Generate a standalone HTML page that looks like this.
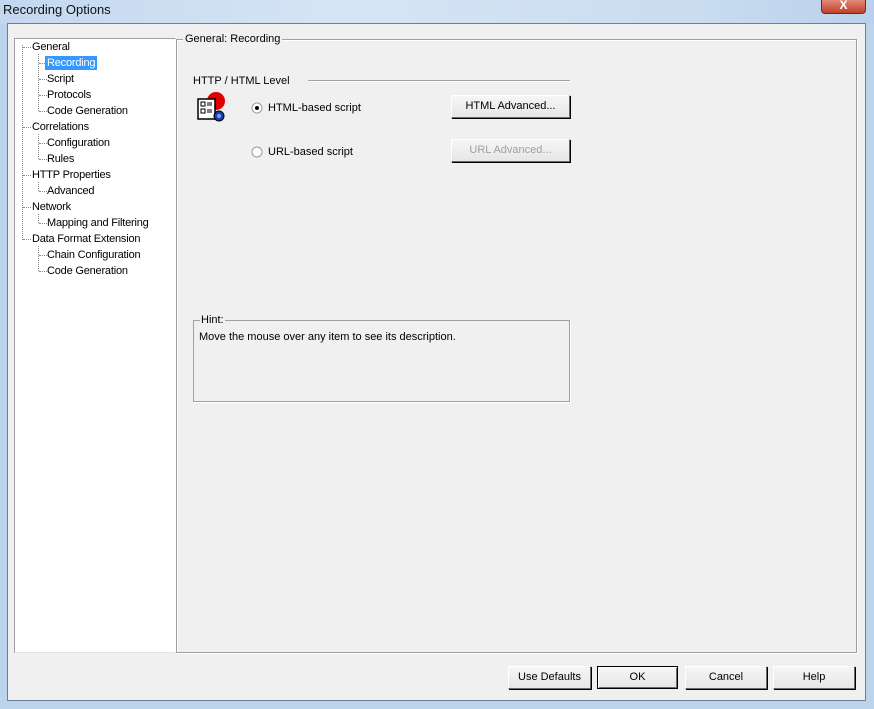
<!DOCTYPE html>
<html><head><meta charset="utf-8"><style>
*{margin:0;padding:0;box-sizing:border-box}
body{width:874px;height:709px;position:relative;overflow:hidden;background:#bcd3ec;font-family:"Liberation Sans",sans-serif;font-size:11px;color:#000}
.a{position:absolute;white-space:nowrap}
.btn{position:absolute;height:23px;background:linear-gradient(#f6f6f6,#e6e6e6);border:1px solid #fff;border-right-color:#6b6b6b;border-bottom-color:#6b6b6b;box-shadow:1px 1px 0 #000;text-align:center;line-height:20px}
.t{position:absolute;left:0;height:14px;line-height:14px;white-space:nowrap;letter-spacing:-0.2px}
.dl{position:absolute;border-left:1px dotted #888}
.dh{position:absolute;border-top:1px dotted #888;width:8px}
</style></head><body>
<div class="a" style="left:0;top:0;width:874px;height:24px;background:linear-gradient(90deg,#c3d8ef,#d6e5f5 40%,#c9dcf0 80%,#b9d1ea)"></div>
<div class="a" style="left:3px;top:2px;font-size:13px;color:#111">Recording Options</div>
<div class="a" style="left:821px;top:0;width:45px;height:14px;background:linear-gradient(#e08a78,#c0402a);border:1px solid #6b2a20;border-top:none;border-radius:0 0 4px 4px;color:#fff;font-weight:bold;text-align:center;line-height:10px;font-size:12px">X</div>
<div class="a" style="left:7px;top:23px;width:859px;height:678px;background:#f0f0f0;border:1px solid #6d7f94"></div>
<div class="a" style="left:14px;top:38px;width:162px;height:615px;background:#fff;border:1px solid #a0a0a0;border-right-color:#fff;border-bottom-color:#e3e3e3"></div>
<div class="dl" style="left:22px;top:45px;height:195px"></div>
<div class="dl" style="left:38px;top:54px;height:57px"></div>
<div class="dl" style="left:38px;top:134px;height:25px"></div>
<div class="dl" style="left:38px;top:182px;height:9px"></div>
<div class="dl" style="left:38px;top:214px;height:9px"></div>
<div class="dl" style="left:38px;top:246px;height:25px"></div>
<div class="a" style="left:0;top:40px;width:176px">
<div class="dh" style="left:23px;top:7px"></div><div class="t" style="left:32px;top:0">General</div>
<div class="dh" style="left:39px;top:23px;width:6px"></div><div class="t" style="left:45px;top:16px;background:#3399ff;color:#fff;padding:0 2px">Recording</div>
<div class="dh" style="left:39px;top:39px"></div><div class="t" style="left:47px;top:32px">Script</div>
<div class="dh" style="left:39px;top:55px"></div><div class="t" style="left:47px;top:48px">Protocols</div>
<div class="dh" style="left:39px;top:71px"></div><div class="t" style="left:47px;top:64px">Code Generation</div>
<div class="dh" style="left:23px;top:87px"></div><div class="t" style="left:32px;top:80px">Correlations</div>
<div class="dh" style="left:39px;top:103px"></div><div class="t" style="left:47px;top:96px">Configuration</div>
<div class="dh" style="left:39px;top:119px"></div><div class="t" style="left:47px;top:112px">Rules</div>
<div class="dh" style="left:23px;top:135px"></div><div class="t" style="left:32px;top:128px">HTTP Properties</div>
<div class="dh" style="left:39px;top:151px"></div><div class="t" style="left:47px;top:144px">Advanced</div>
<div class="dh" style="left:23px;top:167px"></div><div class="t" style="left:32px;top:160px">Network</div>
<div class="dh" style="left:39px;top:183px"></div><div class="t" style="left:47px;top:176px">Mapping and Filtering</div>
<div class="dh" style="left:23px;top:199px"></div><div class="t" style="left:32px;top:192px">Data Format Extension</div>
<div class="dh" style="left:39px;top:215px"></div><div class="t" style="left:47px;top:208px">Chain Configuration</div>
<div class="dh" style="left:39px;top:231px"></div><div class="t" style="left:47px;top:224px">Code Generation</div>
</div>
<div class="a" style="left:176px;top:39px;width:681px;height:614px;border:1px solid #a0a0a0;box-shadow:inset 1px 1px 0 #fff,1px 1px 0 #fff"></div>
<div class="a" style="left:183px;top:33px;background:#f0f0f0;padding:0 2px">General: Recording</div>
<div class="a" style="left:193px;top:75px">HTTP / HTML Level</div>
<div class="a" style="left:308px;top:80px;width:262px;border-top:1px solid #a0a0a0;border-bottom:1px solid #fff"></div>
<svg class="a" style="left:196px;top:91px" width="34" height="32" viewBox="0 0 34 32">
<circle cx="20" cy="10" r="9" fill="#e00000"/>
<rect x="2" y="8" width="17" height="20" fill="#fff" stroke="#000" stroke-width="1.5"/>
<rect x="5" y="11" width="4" height="4" fill="none" stroke="#000"/><rect x="5" y="18" width="4" height="4" fill="none" stroke="#000"/>
<path d="M11 12h5M11 14h5M11 19h5M11 21h5" stroke="#000"/>
<circle cx="23" cy="25" r="5" fill="#1a3fb0" stroke="#000"/><circle cx="23" cy="25" r="2" fill="#6fa0ff"/>
</svg>
<svg class="a" style="left:251px;top:102px" width="12" height="12"><circle cx="6" cy="6" r="5" fill="#fff" stroke="#999"/><circle cx="6" cy="6" r="2" fill="#000"/></svg>
<div class="a" style="left:268px;top:102px">HTML-based script</div>
<svg class="a" style="left:251px;top:146px" width="12" height="12"><circle cx="6" cy="6" r="5" fill="#fff" stroke="#999"/></svg>
<div class="a" style="left:268px;top:146px">URL-based script</div>
<div class="btn" style="left:451px;top:95px;width:119px">HTML Advanced...</div>
<div class="btn" style="left:451px;top:139px;width:119px;color:#a0a0a0">URL Advanced...</div>
<div class="a" style="left:193px;top:320px;width:377px;height:82px;border:1px solid #a0a0a0;box-shadow:1px 1px 0 #fff"></div>
<div class="a" style="left:200px;top:314px;background:#f0f0f0;padding:0 1px">Hint:</div>
<div class="a" style="left:199px;top:331px">Move the mouse over any item to see its description.</div>
<div class="btn" style="left:508px;top:666px;width:83px">Use Defaults</div>
<div class="btn" style="left:597px;top:666px;width:81px;border:1px solid #000;box-shadow:inset 1px 1px 0 #fff,inset -1px -1px 0 #6b6b6b">OK</div>
<div class="btn" style="left:685px;top:666px;width:82px">Cancel</div>
<div class="btn" style="left:773px;top:666px;width:82px">Help</div>
</body></html>
